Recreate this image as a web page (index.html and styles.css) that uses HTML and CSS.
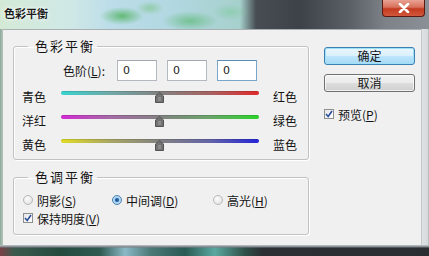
FILE: index.html
```html
<!DOCTYPE html>
<html lang="zh-CN">
<head>
    <meta charset="UTF-8">
    <title>色彩平衡</title>
    <link rel="stylesheet" href="styles.css">
</head>
<body>
    <div class="window">
        <div class="titlebar">
            <span class="title">色彩平衡</span>
            <span class="close">
                <svg width="12" height="10" viewBox="0 0 12 10"><path d="M2 1 L10 9 M10 1 L2 9" stroke="#fff" stroke-width="2.6" stroke-linecap="round"/></svg>
            </span>
        </div>

        <div class="frame">
            <div class="frame-left"></div>
            <div class="client">
                <div class="main">
                    <fieldset class="group">
                        <legend>色彩平衡</legend>
                        <div class="levels">
                            <span class="levels-label">色阶(<u>L</u>):</span>
                            <input class="field" type="text" value="0">
                            <input class="field" type="text" value="0">
                            <input class="field focused" type="text" value="0">
                        </div>
                        <div class="slider-row">
                            <span class="lbl-left">青色</span>
                            <div class="track cyan-red">
                                <svg class="thumb" width="9" height="11" viewBox="0 0 9 11"><polygon points="4.5,0.5 8.5,4 8.5,10.5 0.5,10.5 0.5,4" fill="#727272" stroke="#555"/><rect x="3" y="5" width="3" height="4" fill="#8c8c8c"/></svg>
                            </div>
                            <span class="lbl-right">红色</span>
                        </div>
                        <div class="slider-row">
                            <span class="lbl-left">洋红</span>
                            <div class="track magenta-green">
                                <svg class="thumb" width="9" height="11" viewBox="0 0 9 11"><polygon points="4.5,0.5 8.5,4 8.5,10.5 0.5,10.5 0.5,4" fill="#727272" stroke="#555"/><rect x="3" y="5" width="3" height="4" fill="#8c8c8c"/></svg>
                            </div>
                            <span class="lbl-right">绿色</span>
                        </div>
                        <div class="slider-row">
                            <span class="lbl-left">黄色</span>
                            <div class="track yellow-blue">
                                <svg class="thumb" width="9" height="11" viewBox="0 0 9 11"><polygon points="4.5,0.5 8.5,4 8.5,10.5 0.5,10.5 0.5,4" fill="#727272" stroke="#555"/><rect x="3" y="5" width="3" height="4" fill="#8c8c8c"/></svg>
                            </div>
                            <span class="lbl-right">蓝色</span>
                        </div>
                    </fieldset>

                    <fieldset class="group tone">
                        <legend>色调平衡</legend>
                        <div class="radios">
                            <label class="opt opt-1"><span class="radio"></span><span>阴影(<u>S</u>)</span></label>
                            <label class="opt opt-2"><span class="radio on"></span><span>中间调(<u>D</u>)</span></label>
                            <label class="opt"><span class="radio"></span><span>高光(<u>H</u>)</span></label>
                        </div>
                        <label class="check-row">
                            <span class="box"><svg width="8" height="8" viewBox="0 0 8 8"><path d="M1 4 L3.2 6.5 L7 1" fill="none" stroke="#2a4f9a" stroke-width="1.6"/></svg></span>
                            <span>保持明度(<u>V</u>)</span>
                        </label>
                    </fieldset>
                </div>

                <div class="side">
                    <button class="btn default">确定</button>
                    <button class="btn">取消</button>
                    <label class="check-row preview">
                        <span class="box"><svg width="8" height="8" viewBox="0 0 8 8"><path d="M1 4 L3.2 6.5 L7 1" fill="none" stroke="#2a4f9a" stroke-width="1.6"/></svg></span>
                        <span>预览(<u>P</u>)</span>
                    </label>
                </div>
            </div>
            <div class="frame-right"></div>
        </div>

        <div class="frame-bottom"></div>
    </div>
</body>
</html>
```

FILE: styles.css
```css
* {
    box-sizing: border-box;
}

body {
    margin: 0;
    width: 429px;
    height: 256px;
    overflow: hidden;
    background: #2c3034;
    color: #141414;
    font-family: "Noto Sans CJK SC", "DejaVu Sans", sans-serif;
    font-size: 12px;
}

u {
    text-decoration: underline;
    text-underline-offset: 1px;
}

.window {
    width: 429px;
    height: 256px;
    display: flex;
    flex-direction: column;
}

/* title bar (aero glass, blurred) */
.titlebar {
    height: 29px;
    display: flex;
    align-items: flex-start;
    padding-left: 4px;
    background:
        radial-gradient(ellipse 22px 9px at 122px 16px, rgba(70, 175, 80, 0.75), transparent),
        radial-gradient(ellipse 14px 7px at 150px 8px, rgba(110, 190, 110, 0.5), transparent),
        radial-gradient(ellipse 28px 10px at 190px 21px, rgba(80, 180, 100, 0.6), transparent),
        radial-gradient(ellipse 18px 8px at 230px 12px, rgba(120, 200, 150, 0.5), transparent),
        linear-gradient(90deg, #d4ead6 0, #d0e8e6 70px, #bcdde9 110px, #b2d8e2 170px, #a6d0cc 240px, #474d52 256px, #3c4247 300px, #5a6066 350px, #7c8288 385px, #8a9096 429px);
}

.title {
    line-height: 26px;
    font-size: 11px;
    font-weight: bold;
    color: #1a1a1a;
    text-shadow: 0 0 5px #fff, 0 0 2px #fff;
}

.close {
    margin-left: auto;
    margin-right: 4px;
    width: 43px;
    height: 17px;
    display: flex;
    align-items: center;
    justify-content: center;
    border: 1px solid #5a1a12;
    border-top: none;
    border-radius: 0 0 4px 4px;
    background: linear-gradient(#e9a293 0, #d8705c 45%, #c43a20 55%, #d0583c 100%);
}

.frame {
    height: 216px;
    display: flex;
}

.frame-left {
    width: 3px;
    background: linear-gradient(90deg, #8fa79a, #b4c6bc);
}

.frame-right {
    width: 8px;
    background: linear-gradient(90deg, #a9adb1 0, #dfe2e4 1px, #d6d9dc 7px, #9aa0a5 8px);
}

.frame-bottom {
    height: 11px;
    background:
        linear-gradient(#c2c8cc 0, #7a8086 2px, transparent 3px),
        linear-gradient(90deg, #7a4046 0, #3c5a4e 14px, #244a3e 60px, #2e5a50 100px, #8ab8c6 125px, #4c7a78 150px, #2a5a54 185px, #5aa8a0 215px, #2e5048 245px, #2c3034 262px, #2a2e32 429px);
}

/* dialog client area */
.client {
    flex: 1;
    display: flex;
    align-items: flex-start;
    gap: 15px;
    padding: 10px 0 0 10px;
    background: #f0f0f0;
    border-top: 1px solid #a8b0b4;
}

.main {
    width: 296px;
    margin-top: -1px;
}

.group {
    margin: 0;
    padding: 7px 6px 2px 6px;
    border: 1px solid #c2c2c2;
    border-radius: 3px;
    box-shadow: inset 1px 1px 0 #fff, 1px 1px 0 #fff;
}

.group legend {
    margin-left: 8px;
    padding: 0 2px 0 7px;
    font-size: 13px;
    line-height: 14px;
    letter-spacing: 2px;
}

.levels {
    display: flex;
    align-items: center;
    height: 21px;
    padding-left: 43px;
}

.levels-label {
    width: 54px;
}

.field {
    width: 40px;
    height: 21px;
    margin: 0 10px 0 0;
    padding: 0 0 0 5px;
    border: 1px solid #b4b8c0;
    border-top-color: #a4a8b0;
    background: #fff;
    font-family: "DejaVu Sans", sans-serif;
    font-size: 11px;
    color: #222;
    outline: none;
}

.field.focused {
    border-color: #7aa6cc;
    border-top-color: #5c8cb8;
}

.slider-row {
    display: grid;
    grid-template-columns: 41px 198px auto;
    height: 24px;
    line-height: 24px;
}

.levels + .slider-row {
    margin-top: 4px;
}

.lbl-left {
    padding-left: 2px;
}

.lbl-right {
    margin-left: 14px;
}

.track {
    position: relative;
    height: 4px;
    margin-top: 6px;
    border-radius: 2px;
    box-shadow: inset 0 1px 0 rgba(0, 0, 0, 0.12);
}

.cyan-red {
    background: linear-gradient(90deg, #38d4d0 0, #70a8a6 25%, #828282 50%, #a86262 75%, #e02a2a 100%);
}

.magenta-green {
    background: linear-gradient(90deg, #d42ad4 0, #a46aa4 25%, #828282 50%, #6aa46a 75%, #2ad42a 100%);
}

.yellow-blue {
    background: linear-gradient(90deg, #e0dc24 0, #a8a664 25%, #828282 50%, #6464a8 75%, #2424d8 100%);
}

.thumb {
    position: absolute;
    left: 94px;
    top: 1px;
}

.tone {
    margin-top: 10px;
    padding: 8px 6px 8px 6px;
}

.radios {
    display: flex;
    height: 16px;
    padding-left: 3px;
}

.opt {
    display: flex;
    align-items: center;
    gap: 4px;
}

.opt-1 {
    width: 89px;
}

.opt-2 {
    width: 101px;
}

.radio {
    width: 10px;
    height: 10px;
    border-radius: 50%;
    border: 1px solid #b8b8b8;
    background: radial-gradient(circle at 40% 35%, #fdfdfd, #dcdcdc);
}

.radio.on {
    border-color: #4a7fb0;
    background: radial-gradient(circle, #1e4e86 0, #2f6fb0 28%, #a8d0ef 45%, #d8ecfa 100%);
}

.check-row {
    display: flex;
    align-items: center;
    gap: 4px;
    height: 16px;
    margin-top: 2px;
    padding-left: 3px;
}

.box {
    width: 10px;
    height: 10px;
    display: flex;
    align-items: center;
    justify-content: center;
    border: 1px solid #8e8f8f;
    background: linear-gradient(135deg, #e6e6e6, #fff);
}

/* right column */
.side {
    width: 91px;
    padding-top: 7px;
    display: flex;
    flex-direction: column;
}

.btn {
    width: 91px;
    height: 18px;
    padding: 0;
    border: 1px solid #707070;
    border-radius: 3px;
    background: linear-gradient(#f2f2f2 0, #ebebeb 50%, #dddddd 51%, #cfcfcf 100%);
    box-shadow: inset 0 0 0 1px rgba(255, 255, 255, 0.7);
    font-family: "Noto Sans CJK SC", sans-serif;
    font-size: 12px;
    line-height: 16px;
    color: #141414;
}

.btn.default {
    border-color: #3c7fb1;
    background: linear-gradient(#eaf6fd 0, #d9f0fc 50%, #bee6fd 51%, #a7d9f5 100%);
    box-shadow: inset 0 0 0 1px #9ee0f8;
}

.btn + .btn {
    margin-top: 9px;
}

.preview {
    margin-top: 15px;
    height: 14px;
    padding-left: 0;
}
```
